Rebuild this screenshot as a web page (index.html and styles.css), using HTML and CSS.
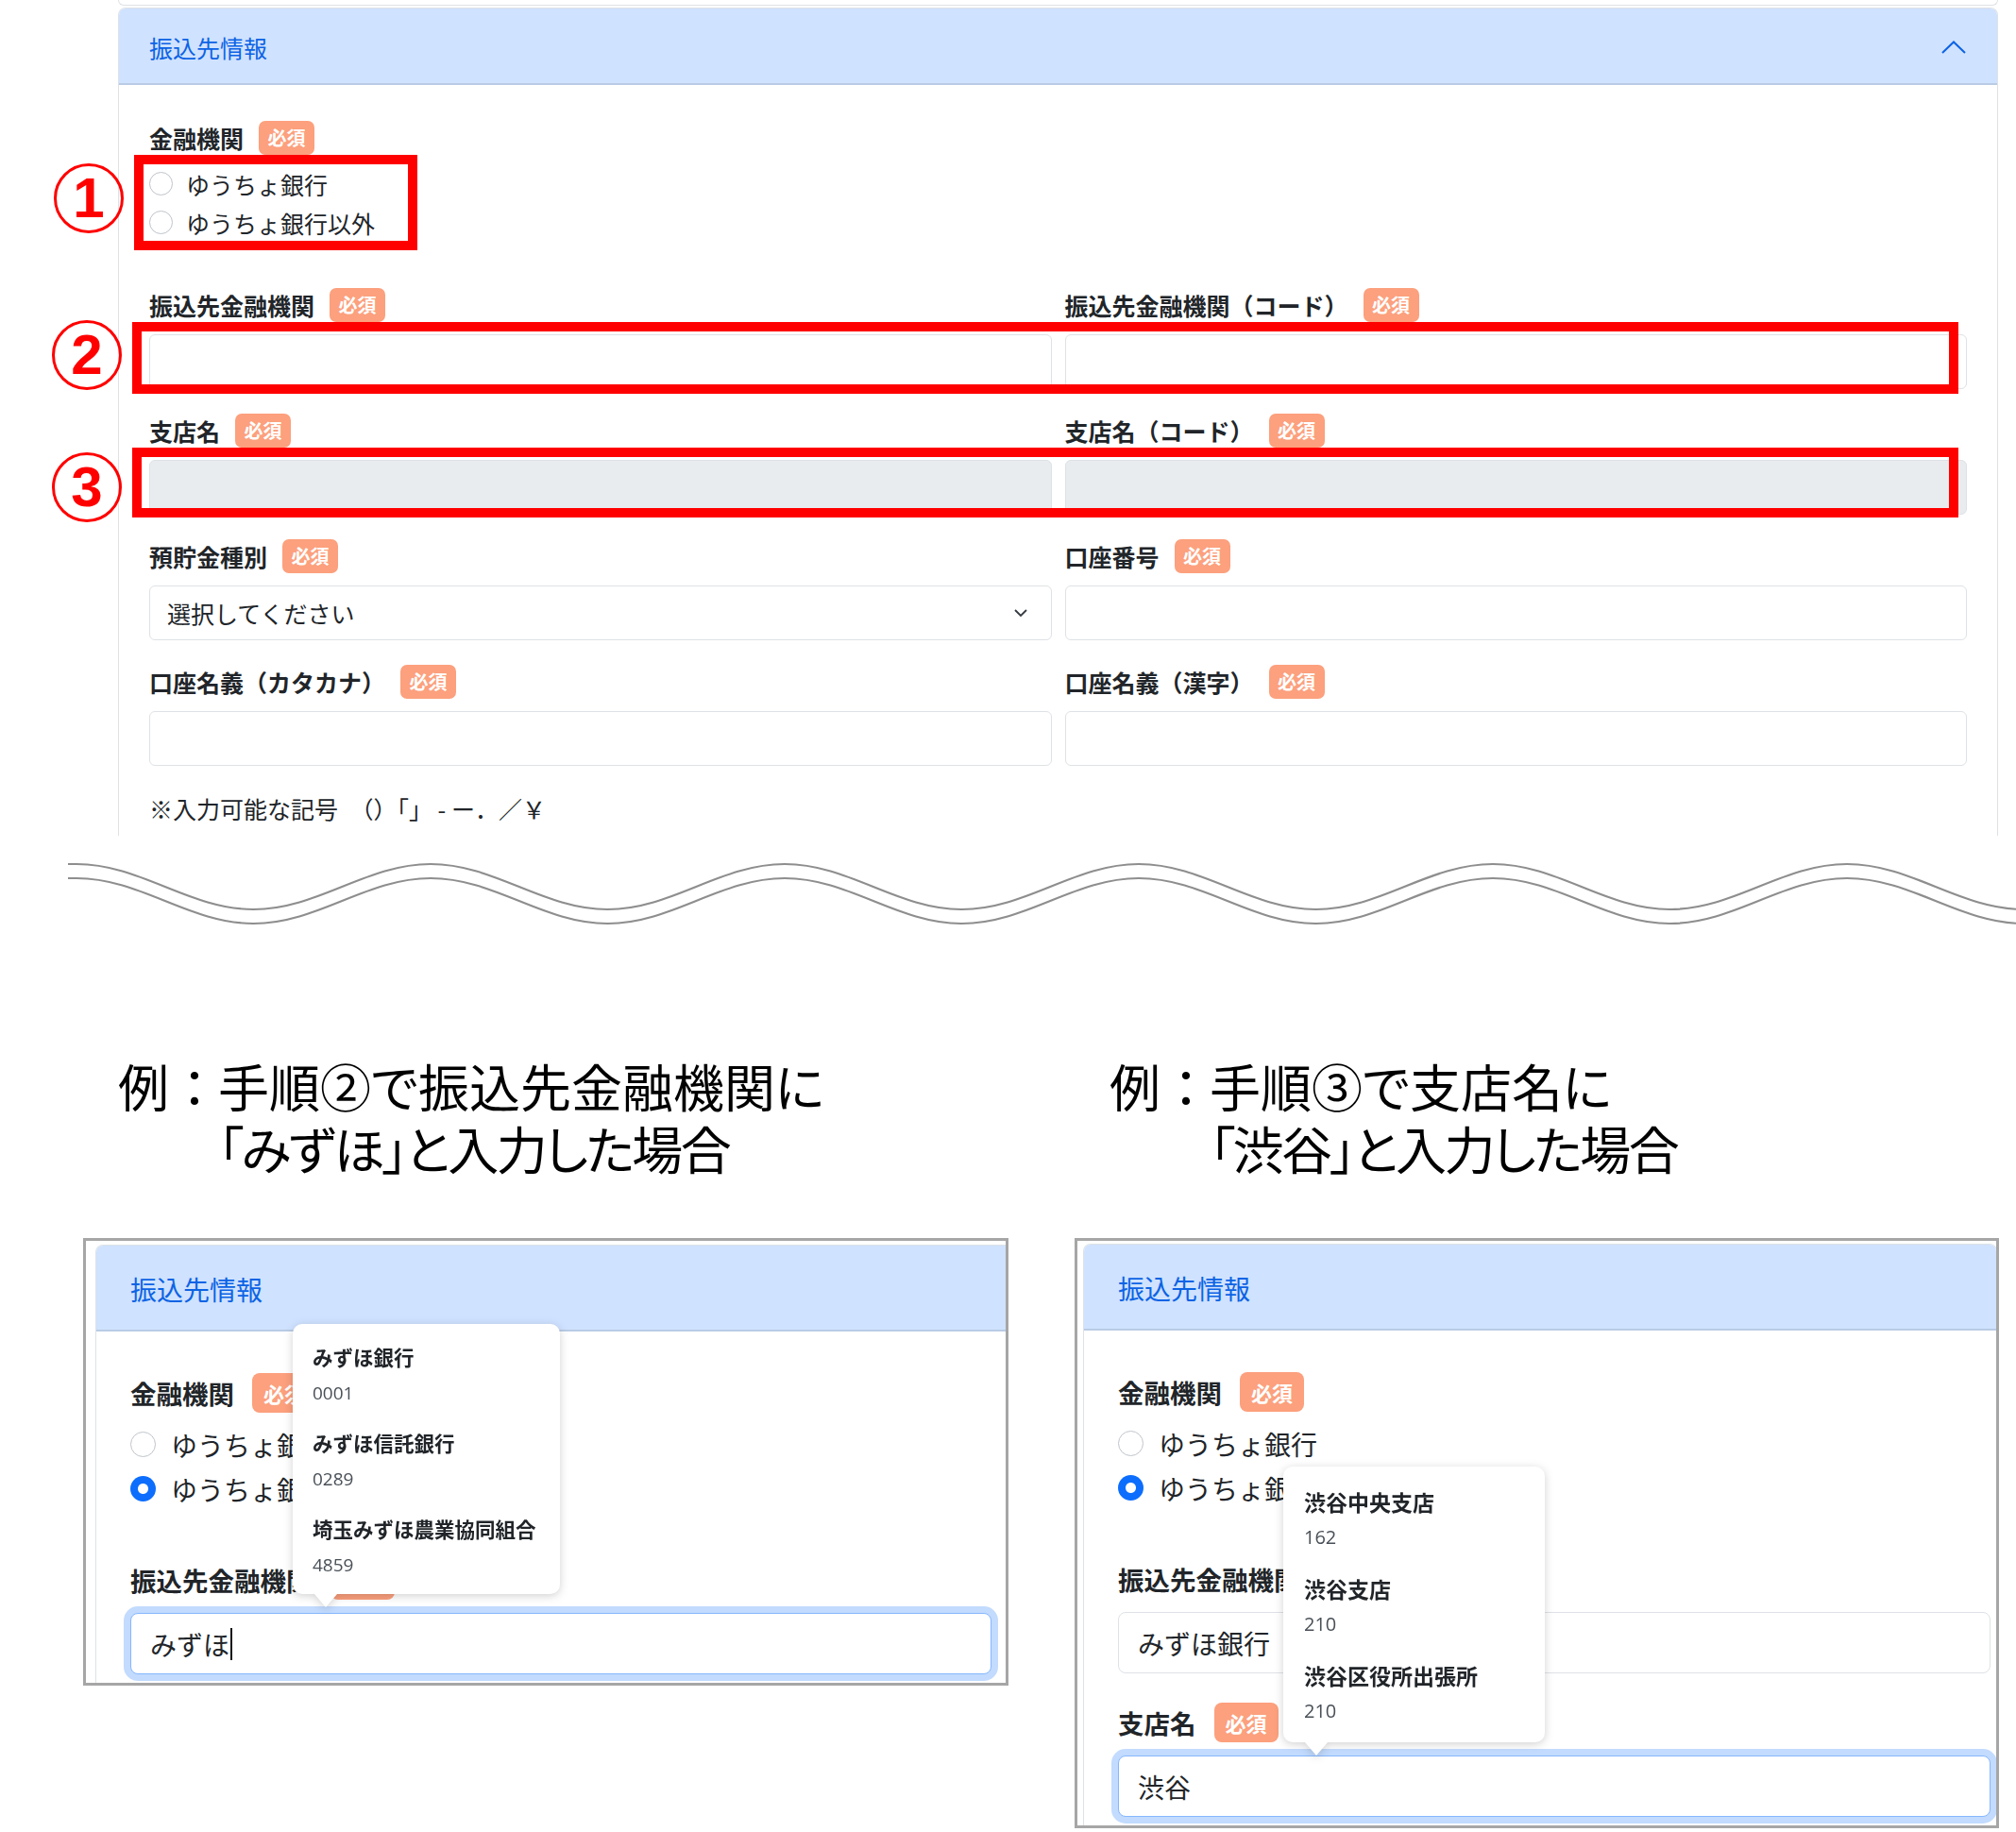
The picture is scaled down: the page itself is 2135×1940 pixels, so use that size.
FILE: index.html
```html
<!DOCTYPE html>
<html lang="ja">
  <head>
    <meta charset="utf-8">
    <title>振込先情報 入力手順</title>
    <link rel="stylesheet" href="styles.css">
  </head>
  <body>
    <div class="page">

      <!-- 入力フォーム全体 -->
      <section class="top">
        <div class="acc-crop">
          <div class="prev-item"></div>
          <div class="acc">
            <div class="acc-head">
              <span>振込先情報</span>
              <svg class="chev" width="26" height="14" viewBox="0 0 26 14"><path d="M1 13L13 1.5L25 13" fill="none" stroke="#0c63e4" stroke-width="2"/></svg>
            </div>
            <div class="acc-body">
              <div class="lbl">金融機関<span class="req">必須</span></div>
              <div class="radios">
                <div class="radio"><span class="dot"></span>ゆうちょ銀行</div>
                <div class="radio"><span class="dot"></span>ゆうちょ銀行以外</div>
              </div>

              <div class="grid">
                <div class="field">
                  <div class="lbl">振込先金融機関<span class="req">必須</span></div>
                  <div class="inp"></div>
                </div>
                <div class="field">
                  <div class="lbl">振込先金融機関（コード）<span class="req">必須</span></div>
                  <div class="inp"></div>
                </div>
                <div class="field">
                  <div class="lbl">支店名<span class="req">必須</span></div>
                  <div class="inp is-disabled"></div>
                </div>
                <div class="field">
                  <div class="lbl">支店名（コード）<span class="req">必須</span></div>
                  <div class="inp is-disabled"></div>
                </div>
                <div class="field">
                  <div class="lbl">預貯金種別<span class="req">必須</span></div>
                  <div class="inp sel">
                    <span>選択してください</span>
                    <svg width="16" height="12" viewBox="0 0 16 12"><path d="M2 3l6 6 6-6" fill="none" stroke="#343a40" stroke-width="1.8"/></svg>
                  </div>
                </div>
                <div class="field">
                  <div class="lbl">口座番号<span class="req">必須</span></div>
                  <div class="inp"></div>
                </div>
                <div class="field">
                  <div class="lbl">口座名義（カタカナ）<span class="req">必須</span></div>
                  <div class="inp"></div>
                </div>
                <div class="field">
                  <div class="lbl">口座名義（漢字）<span class="req">必須</span></div>
                  <div class="inp"></div>
                </div>
              </div>

              <p class="note">※入力可能な記号　（）「」 - ー．／￥</p>
            </div>
          </div>
        </div>

        <!-- 手順の赤枠 -->
        <div class="mark-box box-1"></div>
        <div class="mark-box box-2"></div>
        <div class="mark-box box-3"></div>
        <div class="mark-num num-1">1</div>
        <div class="mark-num num-2">2</div>
        <div class="mark-num num-3">3</div>
      </section>

      <div class="wave">
        <svg width="2135" height="120" viewBox="0 0 2135 120">
          <g fill="none" stroke="#8e8e8e" stroke-width="2.2">
            <path id="wline" d="M72 30L81 30C149.3 30 200.2 78 268.5 78S387.7 30 456 30S575.2 78 643.5 78S762.7 30 831 30S950.2 78 1018.5 78S1137.7 30 1206 30S1325.2 78 1393.5 78S1512.7 30 1581 30S1700.2 78 1768.5 78S1887.7 30 1956 30S2075.2 78 2143.5 78"/>
            <use href="#wline" transform="translate(0 15)"/>
          </g>
        </svg>
      </div>

      <!-- 入力例 -->
      <section class="examples">
        <div class="example">
          <h2 class="ex-title"><span class="ex-lead">例：</span><span class="ex-text">手順②で振込先金融機関に<br><span class="ex-sub">「みずほ」と入力した場合</span></span></h2>
          <div class="shot shot-a">
            <div class="mini mini-a">
              <div class="mini-head">振込先情報</div>
              <div class="mini-body">
                <div class="lbl lbl-lg">金融機関<span class="req req-lg">必須</span></div>
                <div class="radios radios-lg">
                  <div class="radio"><span class="dot"></span>ゆうちょ銀行</div>
                  <div class="radio"><span class="dot is-checked"></span>ゆうちょ銀行以外</div>
                </div>
                <div class="field-lg">
                  <div class="lbl lbl-lg">振込先金融機関<span class="req req-lg">必須</span></div>
                  <div class="inp inp-lg is-focus">みずほ<span class="caret"></span></div>
                </div>
              </div>
            </div>
            <div class="pop pop-a">
              <div class="pop-item"><div class="pop-name">みずほ銀行</div><div class="pop-code">0001</div></div>
              <div class="pop-item"><div class="pop-name">みずほ信託銀行</div><div class="pop-code">0289</div></div>
              <div class="pop-item"><div class="pop-name">埼玉みずほ農業協同組合</div><div class="pop-code">4859</div></div>
            </div>
          </div>
        </div>

        <div class="example">
          <h2 class="ex-title"><span class="ex-lead">例：</span><span class="ex-text">手順③で支店名に<br><span class="ex-sub">「渋谷」と入力した場合</span></span></h2>
          <div class="shot shot-b">
            <div class="mini mini-b">
              <div class="mini-head">振込先情報</div>
              <div class="mini-body">
                <div class="lbl lbl-lg">金融機関<span class="req req-lg">必須</span></div>
                <div class="radios radios-lg">
                  <div class="radio"><span class="dot"></span>ゆうちょ銀行</div>
                  <div class="radio"><span class="dot is-checked"></span>ゆうちょ銀行以外</div>
                </div>
                <div class="field-lg">
                  <div class="lbl lbl-lg">振込先金融機関<span class="req req-lg">必須</span></div>
                  <div class="inp inp-lg">みずほ銀行</div>
                </div>
                <div class="field-lg field-next">
                  <div class="lbl lbl-lg">支店名<span class="req req-lg">必須</span></div>
                  <div class="inp inp-lg is-focus">渋谷</div>
                </div>
              </div>
            </div>
            <div class="pop pop-b">
              <div class="pop-item"><div class="pop-name">渋谷中央支店</div><div class="pop-code">162</div></div>
              <div class="pop-item"><div class="pop-name">渋谷支店</div><div class="pop-code">210</div></div>
              <div class="pop-item"><div class="pop-name">渋谷区役所出張所</div><div class="pop-code">210</div></div>
            </div>
          </div>
        </div>
      </section>

    </div>
  </body>
</html>
```

FILE: styles.css
```css
* {
  box-sizing: border-box;
}

body {
  margin: 0;
  background: #fff;
  color: #212529;
  font-family: "Noto Sans CJK JP", "Noto Sans", sans-serif;
}

.page {
  width: 2135px;
}

/* ---- 上のフォーム ---- */
.top {
  position: relative;
  height: 885px;
}

.acc-crop {
  margin-left: 125px;
  width: 1991px;
  height: 885px;
  overflow: hidden;
}

.prev-item {
  height: 6px;
  border: 1px solid #dee2e6;
  border-top: 0;
  border-radius: 0 0 8px 8px;
}

.acc {
  margin-top: 2px;
  min-height: 900px;
  border: 1px solid #dee2e6;
  border-bottom: 0;
  border-radius: 8px 8px 0 0;
  overflow: hidden;
}

.acc-head {
  display: flex;
  align-items: center;
  justify-content: space-between;
  height: 81px;
  padding: 0 33px 0 32px;
  background: #cfe2ff;
  box-shadow: inset 0 -2px 0 rgba(0, 0, 0, .1);
  color: #0c63e4;
  font-size: 25px;
}

.acc-body {
  padding: 37px 32px 0;
}

.lbl {
  display: flex;
  align-items: center;
  gap: 16px;
  height: 37px;
  font-size: 25px;
  font-weight: 700;
}

.req {
  display: flex;
  align-items: center;
  justify-content: center;
  width: 59px;
  height: 36px;
  border-radius: 7px;
  background: #fca07d;
  color: #fff;
  font-size: 20px;
  font-weight: 700;
}

.radios {
  margin-top: 10px;
}

.radio {
  display: flex;
  align-items: center;
  gap: 14px;
  height: 41px;
  font-size: 25px;
}

.dot {
  width: 25px;
  height: 25px;
  border: 1px solid #bfc4ca;
  border-radius: 50%;
  background: #fff;
}

.dot.is-checked {
  border: 0;
  background: radial-gradient(circle, #fff 0 5px, #0d6efd 6px);
}

.grid {
  display: grid;
  grid-template-columns: 1fr 1fr;
  column-gap: 14px;
  row-gap: 25px;
  margin-top: 48px;
}

.inp {
  height: 58px;
  margin-top: 13px;
  border: 1px solid #dee2e6;
  border-radius: 6px;
  background: #fff;
}

.inp.is-disabled {
  background: #e9ecef;
}

.sel {
  display: flex;
  align-items: center;
  justify-content: space-between;
  padding: 0 24px 0 18px;
  font-size: 25px;
}

.note {
  margin: 27px 0 0;
  font-size: 25px;
  line-height: 36px;
}

/* 赤枠と番号 */
.mark-box {
  position: absolute;
  border: 10px solid #ff0000;
}

.box-1 { left: 142px; top: 164px; width: 300px; height: 101px; }
.box-2 { left: 140px; top: 341px; width: 1934px; height: 76px; }
.box-3 { left: 140px; top: 474px; width: 1934px; height: 74px; }

.mark-num {
  position: absolute;
  display: flex;
  align-items: center;
  justify-content: center;
  width: 74px;
  height: 74px;
  border: 3px solid #ff0000;
  border-radius: 50%;
  color: #ff0000;
  font-family: "Liberation Sans", sans-serif;
  font-size: 60px;
  font-weight: 700;
  line-height: 1;
}

.num-1 { left: 57px; top: 173px; }
.num-2 { left: 55px; top: 339px; }
.num-3 { left: 55px; top: 479px; }

/* 波線 */
.wave {
  height: 120px;
}

.wave svg {
  display: block;
}

/* ---- 入力例 ---- */
.examples {
  display: grid;
  grid-template-columns: 1050px 1050px;
  padding: 112px 0 0 88px;
}

.ex-title {
  display: flex;
  margin: 0 0 62px 37px;
  font-size: 54px;
  font-weight: 400;
  line-height: 66px;
  color: #000;
}

.ex-lead {
  flex: none;
  width: 106px;
}

.ex-text {
  font-feature-settings: "palt";
}

.ex-sub {
  letter-spacing: -2.5px;
}

.shot {
  position: relative;
  overflow: hidden;
  border: 3px solid #a6a6a6;
  background: #fff;
}

.shot-a {
  width: 980px;
  height: 474px;
  padding: 4px 0 0 10px;
}

.shot-b {
  width: 979px;
  height: 625px;
  padding: 3px 0 0 6px;
}

.mini {
  border: 1px solid #dee2e6;
  border-bottom: 0;
  border-radius: 8px 8px 0 0;
  overflow: hidden;
  min-height: 700px;
}

.mini-a {
  width: 1000px;
}

.mini-b {
  width: 968px;
}

.mini-head {
  display: flex;
  align-items: center;
  height: 91px;
  padding-left: 36px;
  background: #cfe2ff;
  box-shadow: inset 0 -2px 0 rgba(0, 0, 0, .1);
  color: #0c63e4;
  font-size: 28px;
}

.mini-body {
  padding: 44px 0 0 36px;
}

.lbl-lg {
  gap: 19px;
  height: 42px;
  font-size: 27.5px;
}

.req-lg {
  width: 68px;
  height: 42px;
  border-radius: 8px;
  font-size: 22px;
}

.radios-lg .radio {
  gap: 16px;
  height: 47px;
  font-size: 28px;
}

.radios-lg .dot {
  width: 27px;
  height: 27px;
}

.field-lg {
  margin-top: 52px;
}

.field-next {
  margin-top: 31px;
}

.mini-a .inp-lg {
  width: 912px;
}

.mini-b .inp-lg {
  width: 924px;
}

.inp-lg {
  display: flex;
  align-items: center;
  height: 65px;
  margin-top: 14px;
  padding-left: 20px;
  border-radius: 8px;
  font-size: 28px;
}

.inp.is-focus {
  border-color: #86b7fe;
  box-shadow: 0 0 0 7px rgba(13, 110, 253, .25);
}

.caret {
  display: inline-block;
  width: 2px;
  height: 34px;
  margin-left: 1px;
  background: #111;
}

/* 候補ポップアップ */
.pop {
  position: absolute;
  padding: 20px 21px 16px;
  border-radius: 10px;
  background: #fff;
  filter: drop-shadow(0 2px 5px rgba(0, 0, 0, .18));
}

.pop::after {
  content: "";
  position: absolute;
  left: 23px;
  bottom: -14px;
  border-left: 12px solid transparent;
  border-right: 12px solid transparent;
  border-top: 14px solid #fff;
}

.pop-a {
  left: 219px;
  top: 88px;
  width: 283px;
}

.pop-b {
  left: 218px;
  top: 239px;
  width: 277px;
  padding: 22px 22px 18px;
}

.pop-item + .pop-item {
  margin-top: 23px;
}

.pop-b .pop-item + .pop-item {
  margin-top: 24px;
}

.pop-name {
  font-size: 21.5px;
  font-weight: 700;
  line-height: 30px;
  white-space: nowrap;
}

.pop-code {
  margin-top: 8px;
  color: #495057;
  font-family: "Open Sans", sans-serif;
  font-size: 19px;
  line-height: 30px;
}

.pop-b .pop-name {
  font-size: 23px;
}

.pop-b .pop-code {
  font-size: 20px;
}
```
